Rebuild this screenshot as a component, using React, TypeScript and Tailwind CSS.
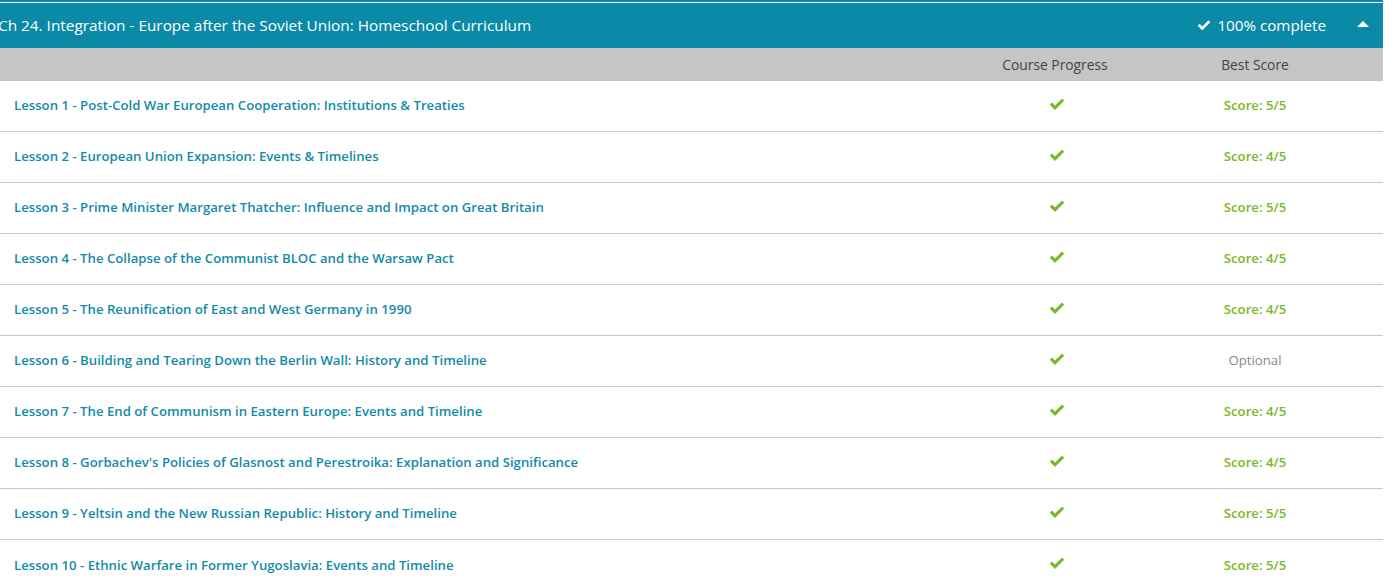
import React from 'react';

const lessons = [
  { title: 'Lesson 1 - Post-Cold War European Cooperation: Institutions & Treaties', score: 'Score: 5/5' },
  { title: 'Lesson 2 - European Union Expansion: Events & Timelines', score: 'Score: 4/5' },
  { title: 'Lesson 3 - Prime Minister Margaret Thatcher: Influence and Impact on Great Britain', score: 'Score: 5/5' },
  { title: 'Lesson 4 - The Collapse of the Communist BLOC and the Warsaw Pact', score: 'Score: 4/5' },
  { title: 'Lesson 5 - The Reunification of East and West Germany in 1990', score: 'Score: 4/5' },
  { title: 'Lesson 6 - Building and Tearing Down the Berlin Wall: History and Timeline', score: null },
  { title: 'Lesson 7 - The End of Communism in Eastern Europe: Events and Timeline', score: 'Score: 4/5' },
  { title: "Lesson 8 - Gorbachev's Policies of Glasnost and Perestroika: Explanation and Significance", score: 'Score: 4/5' },
  { title: 'Lesson 9 - Yeltsin and the New Russian Republic: History and Timeline', score: 'Score: 5/5' },
  { title: 'Lesson 10 - Ethnic Warfare in Former Yugoslavia: Events and Timeline', score: 'Score: 5/5' },
];

const Check = ({ className }: { className?: string }) => (
  <svg viewBox="0 0 16 12" className={className} fill="currentColor">
    <path d="M0.8 6.2 L3 4 L6 7 L13 0 L15.2 2.2 L6 11.4 Z" />
  </svg>
);

export default function App() {
  return (
    <div className="w-[1396px] bg-white" style={{ fontFamily: '"Open Sans", sans-serif' }}>
      <div className="w-[1383px]">
        <div className="h-[2px] bg-[#0b8aa8]" />
        <div className="h-px bg-white" />
        <div className="h-[45px] bg-[#0b8aa8] flex items-center text-white">
          <div className="flex-1 -ml-[2px] text-[15.35px]">Ch 24. Integration - Europe after the Soviet Union: Homeschool Curriculum</div>
          <div className="flex items-center gap-[6px] text-[15.2px] mr-[31px]">
            <Check className="w-[14px] h-[11px]" />
            <span>100% complete</span>
          </div>
          <div className="mr-[14px] mb-[4px] w-0 h-0 border-l-[6px] border-r-[6px] border-b-[6px] border-l-transparent border-r-transparent border-b-white" />
        </div>
        <div className="h-[33px] bg-[#c5c5c5] flex items-center pt-[2px] text-[13.8px] text-[#444]">
          <div className="flex-1" />
          <div className="w-[200px] text-center">Course Progress</div>
          <div className="w-[200px] text-center mr-[28px]">Best Score</div>
        </div>
        {lessons.map((l, i) => (
          <div key={i} className={`h-[51px] flex items-center ${i < lessons.length - 1 ? 'border-b border-[#c8c8c8]' : ''}`}>
            <div className="flex-1 pl-[14px] text-[13.2px] font-semibold text-[#138ba8]">{l.title}</div>
            <div className="w-[200px] flex justify-center mb-[4px] pl-[3px]">
              <Check className="w-[16px] h-[13px] text-[#7ab929]" />
            </div>
            <div className={`w-[200px] text-center mr-[28px] text-[13.2px] ${l.score ? 'font-semibold text-[#7ab929]' : 'text-[#888]'}`}>
              {l.score ?? 'Optional'}
            </div>
          </div>
        ))}
      </div>
    </div>
  );
}
